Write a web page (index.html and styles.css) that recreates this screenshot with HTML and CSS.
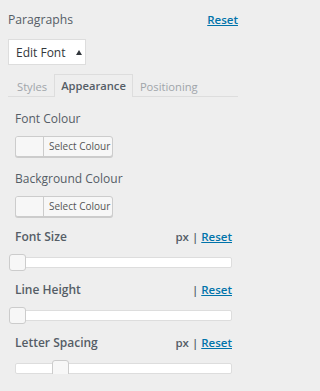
FILE: index.html
```html
<!DOCTYPE html>
<html>
<head>
<meta charset="utf-8">
<link rel="stylesheet" href="styles.css">
</head>
<body>
<div class="panel">
  <div class="header">
    <span class="title">Paragraphs</span>
    <a class="reset" href="#">Reset</a>
  </div>
  <div class="edit-font">Edit Font <span class="caret"></span></div>
  <div class="tabs">
    <span class="tab">Styles</span>
    <span class="tab active">Appearance</span>
    <span class="tab">Positioning</span>
  </div>
  <div class="content">
    <div class="field">
      <div class="label">Font Colour</div>
      <div class="color-btn"><span class="swatch"></span><span class="btn-text">Select Colour</span></div>
    </div>
    <div class="field">
      <div class="label">Background Colour</div>
      <div class="color-btn"><span class="swatch"></span><span class="btn-text">Select Colour</span></div>
    </div>
    <div class="slider-field">
      <div class="slider-head"><span class="slabel">Font Size</span><span class="units">px | <a class="reset" href="#">Reset</a></span></div>
      <div class="track"><span class="handle" style="left:-7px"></span></div>
    </div>
    <div class="slider-field">
      <div class="slider-head"><span class="slabel">Line Height</span><span class="units">| <a class="reset" href="#">Reset</a></span></div>
      <div class="track"><span class="handle" style="left:-7px"></span></div>
    </div>
    <div class="slider-field">
      <div class="slider-head"><span class="slabel">Letter Spacing</span><span class="units">px | <a class="reset" href="#">Reset</a></span></div>
      <div class="track"><span class="handle" style="left:36px"></span></div>
    </div>
  </div>
</div>
</body>
</html>
```
FILE: styles.css
```css
html, body {
  margin: 0;
  padding: 0;
  background: #eeeeee;
}
body {
  font-family: "Open Sans", "Noto Sans", sans-serif;
  color: #555d66;
  font-size: 13px;
}
.panel {
  width: 250px;
  box-sizing: border-box;
  padding: 10px 12px 0 8px;
}
.header {
  display: flex;
  justify-content: space-between;
  align-items: baseline;
  height: 20px;
  line-height: 20px;
}
.title {
  font-size: 12.2px;
  color: #555d66;
}
.reset {
  color: #0073aa;
  font-weight: 600;
  font-size: 11.5px;
  text-decoration: underline;
}
.edit-font {
  margin-top: 9px;
  height: 24px;
  border: 1px solid #dddddd;
  background: #fff;
  color: #32373c;
  font-size: 12px;
  display: flex;
  align-items: center;
  padding-left: 7px;
  width: 69px;
}
.caret {
  margin-left: 11px;
  width: 0;
  height: 0;
  border-left: 3.5px solid transparent;
  border-right: 3.5px solid transparent;
  border-bottom: 5px solid #32373c;
}
.tabs {
  margin-top: 10px;
  display: flex;
  border-bottom: 1px solid #dddddd;
  height: 21px;
  align-items: flex-end;
}
.tab {
  height: 21px;
  line-height: 22px;
  padding: 0 6px;
  color: #a0a5aa;
  font-size: 11.2px;
  border: 1px solid transparent;
  border-bottom: none;
  margin-bottom: -1px;
}
.tab:first-child {
  padding-left: 8px;
}
.tab.active {
  color: #555d66;
  font-weight: 600;
  border-color: #dddddd;
  background: #eeeeee;
  height: 22px;
}
.content {
  padding: 0 6px 0 7px;
}
.field {
  margin-top: 14px;
}
.label {
  font-size: 12px;
  line-height: 16px;
}
.color-btn {
  margin-top: 9px;
  display: flex;
  width: 96px;
  height: 19px;
  border: 1px solid #cccccc;
  border-radius: 3px;
  background: #f7f7f7;
  box-shadow: 0 1px 0 #cccccc;
  overflow: hidden;
}
.swatch {
  width: 27px;
  border-right: 1px solid #cccccc;
  background: #f7f7f7;
}
.btn-text {
  font-size: 10px;
  color: #555;
  line-height: 19px;
  padding-left: 5px;
}
.slider-field {
  margin-top: 12px;
}
.slider-field + .slider-field {
  margin-top: 14px;
}
.slider-head {
  display: flex;
  justify-content: space-between;
  align-items: baseline;
  height: 16px;
  line-height: 16px;
}
.slabel {
  font-weight: 600;
  font-size: 12px;
}
.units {
  font-weight: 600;
  font-size: 11.5px;
}
.track {
  position: relative;
  margin-top: 12px;
  height: 9px;
  border: 1px solid #dddddd;
  background: #fff;
  border-radius: 2px;
}
.handle {
  position: absolute;
  top: -4px;
  width: 15px;
  height: 15px;
  border: 1px solid #cccccc;
  border-radius: 3px;
  background: #f7f7f7;
}
```
